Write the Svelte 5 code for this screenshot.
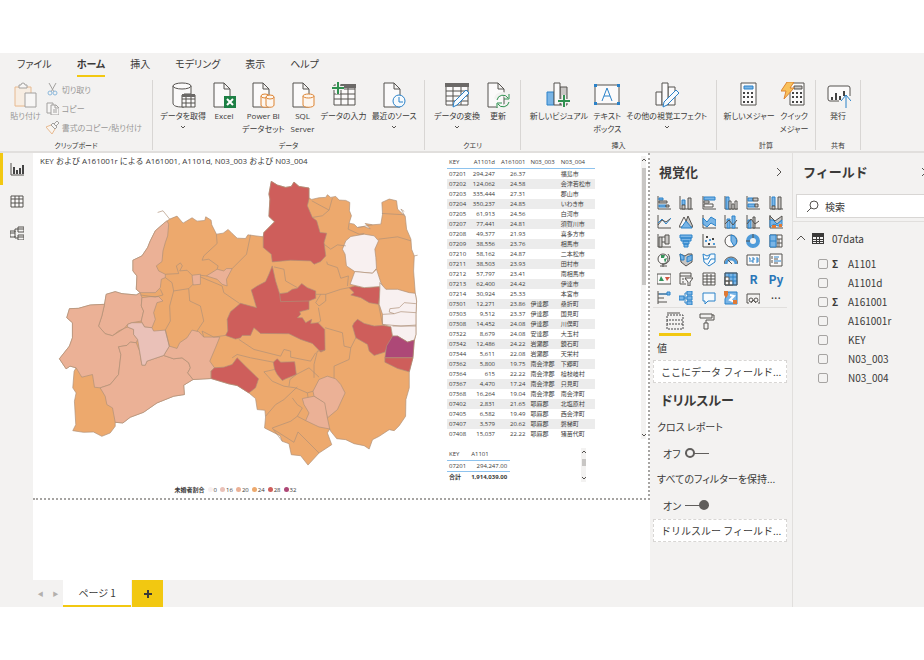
<script lang="ts">
	type Shape = [cls: string, d: string];

	const menu = ['ファイル', 'ホーム', '挿入', 'モデリング', '表示', 'ヘルプ'];

	// Ribbon icons, 26x26
	const doc = 'M3 1h10l6 6v18H3zM13 1v6h6';
	const ribbonIcons: Record<string, Shape[]> = {
		paste: [['of', 'M3 5h16v20H3z'], ['o', 'M3 5h16v19H3z'], ['kw', 'M7 6V3h2a2 2 0 0 1 4 0h2v3z'], ['kw', 'M13 11h11v14H13z']],
		getData: [['kw', 'M3 4v17c0 3 4 4 9 4h2V12h7V4'], ['kw', 'M3 4a9 3 0 1 0 18 0a9 3 0 1 0-18 0'], ['kw', 'M12 13h13v12H12z'], ['k', 'M12 17h13M12 21h13M16 13v12M21 13v12'], ['kf', 'M12 12h13v3H12z']],
		excel: [['kw', doc], ['g', 'M13 14h12v12H13z'], ['w', 'm16 17 6 6m0-6-6 6']],
		dataset: [['kw', doc], ['ow', 'M11 14v9c0 3 8 3 8 0v-9'], ['ow', 'M11 14a4 2 0 1 0 8 0a4 2 0 1 0-8 0'], ['ow', 'M16 15v8c0 3 8 3 8 0v-8'], ['ow', 'M16 15a4 2 0 1 0 8 0a4 2 0 1 0-8 0']],
		sql: [['kw', doc], ['ow', 'M13 14v9c0 3 11 3 11 0v-9'], ['ow', 'M13 14a5.5 2 0 1 0 11 0a5.5 2 0 1 0-11 0']],
		enter: [['kw', 'M3 3h21v20H3z'], ['k', 'M3 12h21M3 17h21M10 3v20M17 3v20M3 7h21'], ['kf', 'M10 2h15v4H10z'], ['cut', 'M1 6h12M7 0v12'], ['gs', 'M1 6h12M7 0v12']],
		recent: [['kw', doc], ['bw', 'M12 19a6 6 0 1 0 12 0a6 6 0 1 0-12 0'], ['b', 'M18 15v5h4']],
		transform: [['kw', 'M2 2h22v21H2z'], ['k', 'M2 9h22M2 14h22M2 19h22M9 4v19M17 4v19'], ['kf', 'M1 1h24v4H1z'], ['bw', 'm22 8 3 3-12 12-4 2 1-5z']],
		refresh: [['kw', doc], ['cut', 'M11 17a6 6 0 0 1 11-2M23 20a6 6 0 0 1-11 2'], ['green1', 'M12 18a6 6 0 0 1 11-2m1-4v5h-5M24 20a6 6 0 0 1-11 2m-1 4v-5h5']],
		visual: [['bf', 'M1 10h7v13H1z'], ['kgrey', 'M14 5h7v18h-7z'], ['kw', 'M8 1h6v22H8z'], ['cut', 'M12 19h12M18 13v12'], ['gs', 'M12 19h12M18 13v12']],
		text: [['kw', 'M1 3h24v19H1z'], ['b', 'm8 19 5-13 5 13M10 14h6'], ['dot', 'M0 2h3v3H0zM23 2h3v3h-3zM0 20h3v3H0zM23 20h3v3h-3z']],
		others: [['kw', 'M2 10h6v13H2zM14 5h7v18h-7z'], ['kw', 'M8 1h6v22H8z'], ['bw', 'm22 8 3 3-12 12-4 2 1-5z']],
		measure: [['kw', 'M5 1h15v22H5z'], ['bf', 'M8 4h9v3H8z'], ['dash', 'M7 11h11M7 15h11M7 20h11']],
		quick: [['kw', 'M9 1h14v22H9z'], ['kgrey', 'M13 4h8v3h-8z'], ['dash', 'M11 11h11M11 15h11M11 20h11'], ['bolt', 'M6 0h7L9 6h4L3 17l2-8H0z']],
		publish: [['kw', 'M14 19H5a2 2 0 0 1-2-2V6a2 2 0 0 1 2-2h18a2 2 0 0 1 2 2v8'], ['bars', 'M7 18v-3M11 18v-7M15 18v-4M19 14v-5'], ['cut', 'M21 25V14'], ['b', 'M21 26V13m-5 6 5-6 5 6']]
	};

	const groups = [
		{ name: 'データ', items: [['getData', 'データを取得', 'v'], ['excel', 'Excel', ''], ['dataset', 'Power BI', 'データセット'], ['sql', 'SQL', 'Server'], ['enter', 'データの入力', ''], ['recent', '最近のソース', 'v']] },
		{ name: 'クエリ', items: [['transform', 'データの変換', 'v'], ['refresh', '更新', '']] },
		{ name: '挿入', items: [['visual', '新しいビジュアル', ''], ['text', 'テキスト', 'ボックス'], ['others', 'その他の視覚エフェクト', 'v']] },
		{ name: '計算', items: [['measure', '新しいメジャー', ''], ['quick', 'クイック', 'メジャー']] },
		{ name: '共有', items: [['publish', '発行', '']] }
	];

	// Visual gallery icons, 14x14
	const axis: Shape = ['k', 'M1 0v13h13'];
	const gallery: [string, Shape[]][] = [
		['積み上げ横棒', [axis, ['bf', 'M2 2h4v2H2zM2 9h7v2H2z'], ['kgrey', 'M2 5h8v2H2zM9 9h3v2H9z']]],
		['積み上げ縦棒', [axis, ['bf', 'M3 4h3v5H3z'], ['kgrey', 'M3 9h3v4H3zM9 2h3v11H9z']]],
		['集合横棒', [axis, ['bf', 'M2 1h11v3H2z'], ['kw', 'M2 5h5v2H2zM2 8h9v3H2z']]],
		['集合縦棒', [axis, ['bf', 'M2 1h3v12H2z'], ['kw', 'M5 5h2v8H5zM8 8h2v5H8zM11 5h2v8h-2z']]],
		['100% 横棒', [axis, ['bf', 'M2 2h5v3H2zM2 8h7v3H2z'], ['kgrey', 'M7 2h5v3H7zM9 8h3v3H9z']]],
		['100% 縦棒', [axis, ['bf', 'M3 1h3v9H3z'], ['kgrey', 'M9 1h3v12H9zM3 10h3v3H3z']]],
		['折れ線', [axis, ['b', 'm1 8 4-4 4 5 5-6'], ['k', 'm1 10 4-5 4 2 4-3']]],
		['面', [['kgrey', 'm5 12 4-11 5 11z'], ['kw', 'M0 12 5 2l5 10z'], ['bf', 'm2 13 5-7 6 7z']]],
		['積み上げ面', [axis, ['bf', 'm1 3 4 4 4-5 5 3v6L9 8l-4 4-4-3z']]],
		['複合', [axis, ['bf', 'M3 4h3v9H3zM8 1h3v12H8z'], ['k', 'm1 9 4-4 4 5 4-5']]],
		['複合集合', [axis, ['bf', 'M2 5h3v8H2z'], ['kgrey', 'M7 2h2v11H7z'], ['k', 'm1 9 4-5 4 5 4-3']]],
		['リボン', [axis, ['kgrey', 'M1 1 6 6l7-5v4L7 10 1 5z'], ['bf', 'M1 5h3l4 4 5-4v6H9l-4-2-4 3z'], ['orange', 'M3 10h4v3H3zM10 9h3v3h-3z']]],
		['ウォーターフォール', [axis, ['kgrey', 'M2 3h3v10H2zM8 1h4v9H8z'], ['k', 'M5 3h3M5 8h3']]],
		['じょうご', [['bf', 'M1 1h12v3H1zM2 4h10v3H2zM4 7h6v3H4zM5 10h4v3H5z']]],
		['散布図', [axis, ['dots', 'M4 3h2M10 5h2M6 10h2'], ['bdots', 'M3 7h2M7 6h2M11 10h2']]],
		['円', [['kw', 'M7 1a6 6 0 1 0 0 12A6 6 0 1 0 7 1'], ['bf', 'M7 1v6l3 5a6 6 0 0 0-3-11']]],
		['ドーナツ', [['ring', 'M7 2a5 5 0 1 0 0 10A5 5 0 1 0 7 2'], ['k', 'M7 0v4M0 7h4']]],
		['ツリーマップ', [['kw', 'M1 1h12v12H1zM8 1v12M8 5h5M8 9h5M10 5v8'], ['bf', 'M1 1h6v12H1zM1 7h6']]],
		['マップ', [['kw', 'M6 1a5 5 0 1 0 0 10A5 5 0 1 0 6 1'], ['green', 'M4 2h4L7 5H4zM7 6l3-1-2 5z'], ['k', 'M11 1c4 5 0 11-6 10m1 0v3M3 13h7']]],
		['塗り分け地図', [['kgrey', 'm1 1 5 2 3-2h4v8l-6 4-5-4z'], ['bf', 'm1 1 4 2v4H2zM8 4l5-2v5L8 9z']]],
		['図形マップ', [['bw', 'm1 1 4 2 4-2h4v8l-6 4-5-4z'], ['b', 'M2 6h4l2-4m5 4H9l-3 5']]],
		['ゲージ', [['gauge', 'M2 11a5 5 0 0 1 10 0'], ['k', 'm8 11-4-4M0 11a7 7 0 0 1 14 0']]],
		['カード', [['kw', 'M1 2h13v10H1z'], ['b', 'M3 5h1v4M6 5h2v2H6v2h2M10 5h2v4h-2M10 7h2']]],
		['複数の行カード', [['kw', 'M1 1h12v12H1z'], ['b', 'M5 4h5M5 8h7'], ['k', 'M3 3v3M3 7v3M5 6h4M5 10h4']]],
		['KPI', [['kw', 'M0 2h14v10H0z'], ['green', 'm4 4 3 5H2z'], ['red', 'M8 5h5l-3 4z']]],
		['スライサー', [['k', 'M7 12H1V1h11v4M1 4h11M3 7h2M3 10h2M6 7h1'], ['kw', 'M6 6h8l-3 4v4H9v-4z']]],
		['テーブル', [['kw', 'M1 1h12v12H1z'], ['k', 'M1 4h12M1 7h12M1 10h12M5 2v11M9 2v11']]],
		['マトリックス', [['bf', 'M1 1h12v12H1z'], ['kw', 'M1 5h4v4H1zM1 9h4v4H1zM5 9h4v4H5z'], ['b', 'M9 1v12M5 1v4M5 5h8M9 9h4'], ['k', 'M1 1h12v12H1z']]],
		['R', []],
		['Py', []],
		['主要な影響元', [['k', 'M1 0v13M1 3h9M1 7h6M1 11h9'], ['bf', 'M10 1h3v3h-3z'], ['b', 'M2 3h8']]],
		['分解ツリー', [['bf', 'M0 5h5v4H0zM8 0h5v4H8zM8 5h5v4H8zM8 10h5v4H8z'], ['b', 'M5 7h3M6 2v10M6 2h2M6 12h2']]],
		['Q&A', [['bw', 'M1 2h12v8H6l-3 3v-3H1z']]],
		['ArcGIS', [['bf', 'M4 1h9v12H1V8z'], ['w', 'm6 4 4 1-4 4 5 2'], ['orange', 'M0 0h4v4L2 7 0 4zM9 9h4v4H9z']]],
		['Power Apps', [['k', 'M3 12H1V3h13v9h-2'], ['k', 'M3 9a2 2 0 1 0 4 0a2 2 0 1 0-4 0M8 9a2 2 0 1 0 4 0a2 2 0 1 0-4 0M5 12l2-3 3 3']]],
		['その他', []]
	];

	const rows = [
		['07201', '294,247', '26.37', '', '福島市'],
		['07202', '124,062', '24.58', '', '会津若松市'],
		['07203', '335,444', '27.31', '', '郡山市'],
		['07204', '350,237', '24.85', '', 'いわき市'],
		['07205', '61,913', '24.56', '', '白河市'],
		['07207', '77,441', '24.81', '', '須賀川市'],
		['07208', '49,377', '21.93', '', '喜多方市'],
		['07209', '38,556', '23.76', '', '相馬市'],
		['07210', '58,162', '24.87', '', '二本松市'],
		['07211', '38,503', '23.93', '', '田村市'],
		['07212', '57,797', '23.41', '', '南相馬市'],
		['07213', '62,400', '24.42', '', '伊達市'],
		['07214', '30,924', '25.33', '', '本宮市'],
		['07301', '12,271', '23.86', '伊達郡', '桑折町'],
		['07303', '9,512', '23.37', '伊達郡', '国見町'],
		['07308', '14,452', '24.08', '伊達郡', '川俣町'],
		['07322', '8,679', '24.08', '安達郡', '大玉村'],
		['07342', '12,486', '24.22', '岩瀬郡', '鏡石町'],
		['07344', '5,611', '22.08', '岩瀬郡', '天栄村'],
		['07362', '5,800', '19.75', '南会津郡', '下郷町'],
		['07364', '615', '22.22', '南会津郡', '檜枝岐村'],
		['07367', '4,470', '17.24', '南会津郡', '只見町'],
		['07368', '16,264', '19.04', '南会津郡', '南会津町'],
		['07402', '2,831', '21.65', '耶麻郡', '北塩原村'],
		['07405', '6,582', '19.49', '耶麻郡', '西会津町'],
		['07407', '3,579', '20.62', '耶麻郡', '磐梯町'],
		['07408', '15,037', '22.22', '耶麻郡', '猪苗代町']
	];

	const legend = [['l0', '0'], ['l16', '16'], ['l20', '20'], ['l24', '24'], ['l28', '28'], ['l32', '32']];

	// Prefecture outline first, then the municipalities that leave the 24 band
	const regions: Shape[] = [
		['l24', 'M358 135 380 126 398 147 425 131 440 141 463 139 466 128 482 138 484 152 498 180 518 177 533 166 545 178 560 192 585 193 592 182 638 188 640 175 672 143 655 127 658 75 655 60 662 22 680 33 705 40 722 37 730 24 745 37 775 42 775 72 783 76 805 71 825 70 830 62 840 70 855 67 865 78 885 79 897 85 896 110 902 125 895 147 910 150 920 160 940 157 958 164 943 148 965 152 990 150 995 120 993 85 1015 75 1037 80 1040 105 1063 127 1067 165 1080 195 1082 225 1090 245 1088 290 1093 357 1097 380 1095 420 1095 480 1090 500 1086 550 1075 592 1075 640 1065 675 1064 725 1045 753 1030 768 1015 765 985 785 965 795 955 823 940 813 910 807 885 795 858 792 840 770 837 763 830 775 843 810 805 835 772 871 750 843 722 840 715 807 695 800 688 783 642 760 645 727 643 707 620 705 615 672 595 655 560 633 535 628 482 612 428 615 400 632 402 660 370 665 320 685 280 713 240 728 218 745 195 743 195 755 180 775 155 785 130 772 100 773 68 768 77 750 73 680 78 655 68 640 72 590 78 580 60 575 48 583 28 553 58 515 67 490 67 445 50 430 58 403 85 402 120 392 163 390 168 360 195 352 215 358 258 362 270 355 258 345 260 305 248 290 248 258 275 245 292 220 300 200 315 170 340 148z'],
		['l20', 'M350 140 355 150 352 185 345 205 338 230 335 262 318 275 325 290 345 300 345 310 333 315 330 340 315 355 270 355 258 345 260 305 248 290 248 258 275 245 292 220 300 200 315 170 340 148z'],
		['l20', 'M168 360 195 352 215 358 258 362 270 355 275 370 273 395 280 410 273 440 245 445 232 450 222 462 205 470 187 484 165 478 145 455 155 425 163 390z'],
		['l20', 'M163 390 155 425 145 455 165 478 187 484 222 462 232 458 250 465 250 480 262 495 258 505 240 503 230 513 205 517 212 540 205 600 180 630 150 640 133 638 127 600 95 608 78 580 60 575 48 583 28 553 58 515 67 490 67 445 50 430 58 403 85 402 120 392z'],
		['l20', 'M205 517 230 513 240 503 258 505 268 530 275 572 285 572 290 560 340 543 370 553 395 550 415 565 420 580 412 595 428 615 400 632 402 660 370 665 320 685 280 713 240 728 218 745 195 743 187 700 170 690 165 665 150 640 180 630 205 600 212 540z'],
		['l20', 'M340 543 357 515 380 522 388 505 410 490 425 467 445 472 460 488 508 488 495 520 478 560 492 580 482 590 482 612 428 615 412 595 420 580 415 565 395 550 370 553z'],
		['l20', 'M275 370 300 367 325 367 338 380 320 385 310 415 315 435 305 460 283 458 273 440 280 410 273 395z'],
		['l16', 'M232 450 245 445 275 445 283 458 305 460 310 470 345 467 357 515 340 543 290 560 285 572 275 572 268 530 262 495 250 480 250 465 232 458z'],
		['l20', 'M425 303 450 300 450 330 428 332z'],
		['l20', 'M468 305 500 285 520 290 528 283 545 283 528 315 530 335 515 330 500 315z'],
		['l28', 'M638 188 640 175 672 143 655 127 658 75 655 60 662 22 680 33 705 40 722 37 730 24 745 37 775 42 775 75 770 95 785 130 798 140 808 175 828 177 820 205 825 245 810 262 790 270 780 260 720 258 665 263 662 240 638 220z'],
		['l28', 'M665 275 655 300 645 322 620 335 602 347 618 400 570 387 540 412 530 435 532 470 525 483 555 494 570 490 575 483 600 483 610 460 630 477 715 478 750 495 785 507 810 533 823 527 822 465 802 445 780 447 783 435 765 445 755 430 740 430 750 420 747 412 775 405 775 380 795 372 795 350 770 340 753 328 740 342 725 345 710 355 687 358 675 320z'],
		['l28', 'M492 580 520 578 545 570 560 550 585 575 624 613 615 640 595 655 560 633 535 628 482 612 482 590z'],
		['l28', 'M668 563 680 553 690 563 732 562 737 600 705 613 695 618 680 600 672 585z'],
		['l28', 'M895 340 912 335 940 340 985 337 988 345 983 390 955 385 930 370 900 362 910 355z'],
		['l28', 'M910 445 920 435 940 447 970 455 995 453 1020 457 1025 485 1002 533 970 543 955 530 950 510 915 490 905 455z'],
		['l0', 'M885 200 900 187 940 180 970 185 983 200 972 225 975 250 977 282 965 297 912 292 887 275 883 240 875 225z'],
		['l0', 'M912 292 965 297 977 285 990 325 1000 345 985 337 940 340 898 330z'],
		['l0', 'M987 325 1005 345 1040 345 1075 355 1093 357 1097 380 1095 420 1095 480 1090 497 1070 503 1040 485 1025 485 1020 457 995 450 995 420 985 390 987 345z'],
		['l32', 'M1025 485 1040 485 1070 503 1090 497 1086 550 1002 550 1007 515z'],
		['l28', 'M1002 550 1086 550 1075 592 1040 582 1002 563z'],
		['l20', 'M787 650 805 615 830 605 855 613 870 630 883 655 860 705 830 730 823 700 820 685 790 665z'],
		['l20', 'M755 672 790 665 822 685 830 730 837 763 805 757 765 738 775 715 760 690z']
	];

	const borders =
		'M498 180 500 208 460 245 455 258 475 255 503 275 500 285M345 300 385 298 378 275 390 266 396 275 388 290 410 288 425 303M450 303 468 305' +
		'M450 308 515 335 520 355 568 388M345 310 365 325 370 350 415 343 428 330M370 350 358 395 360 440 345 467M357 515 345 467' +
		'M415 343 418 380 450 395 460 440 440 470M460 488 455 470 490 488 525 483M600 182 588 240 545 283M270 362 315 368 338 362 330 345' +
		'M785 130 815 125 835 108 845 72M783 80 805 92 835 108M820 210 840 225 860 212 885 215M828 262 830 270 860 280 870 312 893 305 890 335' +
		'M670 278 700 285 705 320 740 340M687 358 690 382 775 380M795 360 825 360 870 345 895 340M825 360 825 380 805 395 795 385 810 360' +
		'M803 400 810 440 802 445M983 195 1040 188 1080 200M993 118 1060 122M983 390 995 450M895 147 892 165 925 180 940 178M965 152 920 160' +
		'M823 460 875 475 880 515 900 520 895 555 850 575 850 610M915 490 900 520M823 527 800 530 790 570 790 610' +
		'M565 495 610 525 690 545 700 525 720 530 720 548 780 560 795 535M545 550 560 540 600 550 668 563M672 585 640 592 665 620 700 635 735 640 770 655 787 650' +
		'M737 600 775 580 805 608M715 635 718 615 737 600M770 655 772 668M740 637 700 675 675 690 645 725M725 670 740 690 755 700 740 725 720 740 665 760 695 800' +
		'M670 765 730 803 742 772 805 835M740 725 765 738M995 420 1030 418 1050 412 1095 415M1030 418 1015 413 1017 403 1045 400 1060 385 1095 388' +
		'M995 450 1050 455 1095 452M1025 455 1095 455M322 115 338 110 358 135M1063 127 1050 105 1060 112M1090 245 1100 243';

	const fields = ['A1101', 'A1101d', 'A161001', 'A161001r', 'KEY', 'N03_003', 'N03_004'];
	const summed = ['A1101', 'A161001'];

	let search = $state('');
	let crossReport = $state(false);
	let keepFilters = $state(true);
</script>

{#snippet icon(shapes: Shape[], size: number)}
	<svg class="icon" width={size} height={size} viewBox="0 0 {size} {size}" aria-hidden="true">
		{#each shapes as [cls, d]}<path class={cls} {d} />{/each}
	</svg>
{/snippet}

{#snippet arrow(d: string)}
	<svg class="arrow" width="8" height="8" viewBox="0 0 8 8" aria-hidden="true"><path {d} /></svg>
{/snippet}

{#snippet scrollbar(kind: string)}
	<div class="scroll {kind}">
		{@render arrow('m2 5 2-2 2 2')}
		<span class="thumb"></span>
		{@render arrow('m2 3 2 2 2-2')}
	</div>
{/snippet}

<div class="app">
	<header>
		<nav class="menu">
			{#each menu as item}
				<button class:active={item === 'ホーム'}>{item}</button>
			{/each}
		</nav>
		<div class="ribbon">
			<section class="group">
				<div class="commands clipboard">
					<button class="command" disabled>{@render icon(ribbonIcons.paste, 26)}<span>貼り付け</span></button>
					<div class="stack">
						<button disabled>
							<svg width="13" height="13" viewBox="0 0 13 13"><path class="k" d="m3 0 5 9M10 0 5 9" /><path class="b" d="M2 10a2 2 0 1 0 4 0a2 2 0 1 0-4 0M7 10a2 2 0 1 0 4 0a2 2 0 1 0-4 0" /></svg>
							切り取り
						</button>
						<button disabled>
							<svg width="13" height="13" viewBox="0 0 13 13"><path class="kw" d="M1 1h6v10H1z" /><path class="kw" d="M5 3h5l3 3v7H5zM9 3v3h3M7 8h4M7 10h4" /></svg>
							コピー
						</button>
						<button disabled>
							<svg width="13" height="13" viewBox="0 0 13 13"><path class="ow" d="m0 6 5-2 4 4-3 5z" /><path class="kw" d="m5 4 2-2 4 4-2 2zM8 3l3-3 2 2-3 3" /></svg>
							書式のコピー/貼り付け
						</button>
					</div>
				</div>
				<h2>クリップボード</h2>
			</section>
			{#each groups as group}
				<section class="group">
					<div class="commands">
						{#each group.items as [name, label, more]}
							<button class="command">
								{@render icon(ribbonIcons[name], 26)}
								<span>{label}</span>
								{#if more === 'v'}{@render arrow('m2 4 2 2 2-2')}{:else if more}<span>{more}</span>{/if}
							</button>
						{/each}
					</div>
					<h2>{group.name}</h2>
				</section>
			{/each}
		</div>
	</header>

	<div class="body">
		<nav class="rail">
			<button class="active" aria-label="レポート">{@render icon([['k', 'M1 1v12h13'], ['bars', 'M4 12V5M7 12V8M10 12V6M13 12V3']], 14)}</button>
			<button aria-label="データ">{@render icon([['kw', 'M1 2h12v11H1z'], ['k', 'M1 5h12M1 9h12M5 2v11M9 2v11']], 14)}</button>
			<button aria-label="モデル">{@render icon([['k', 'M0 5h5v6H0zM0 7h5M8 1h6v5H8zM8 3h6M8 9h6v5H8zM8 11h6M5 6V3h3M5 10v2h3']], 14)}</button>
		</nav>

		<main>
			<div class="page">
				<figure>
					<figcaption>KEY および A161001r による A161001, A1101d, N03_003 および N03_004</figcaption>
					<svg class="map" viewBox="-51 -15 1212 930" role="img" aria-label="未婚者割合">
						{#each regions as [cls, d]}<path class={cls} {d} />{/each}
						<path class="border" d={borders} />
					</svg>
					<ul class="legend">
						<li><b>未婚者割合</b></li>
						{#each legend as [cls, label]}
							<li><svg width="5" height="5" viewBox="0 0 5 5"><circle class={cls} cx="2.5" cy="2.5" r="2.5" /></svg>{label}</li>
						{/each}
					</ul>
				</figure>
				<div class="tables">
					<div class="visual">
						<table class="wide">
							<thead>
								<tr><th>KEY</th><th class="num">A1101d</th><th class="num">A161001</th><th>N03_003</th><th>N03_004</th></tr>
							</thead>
							<tbody>
								{#each rows as [key, total, rate, county, city] (key)}
									<tr><td>{key}</td><td class="num">{total}</td><td class="num">{rate}</td><td>{county}</td><td>{city}</td></tr>
								{/each}
							</tbody>
						</table>
						{@render scrollbar('tall')}
					</div>
					<div class="visual small">
						<table>
							<thead><tr><th>KEY</th><th>A1101</th></tr></thead>
							<tbody><tr><td>07201</td><td class="num">294,247.00</td></tr></tbody>
							<tfoot><tr><td>合計</td><td class="num">1,914,039.00</td></tr></tfoot>
						</table>
						{@render scrollbar('short')}
					</div>
				</div>
			</div>
			<footer>
				<button class="step" aria-label="前のページ">◀</button>
				<button class="step" aria-label="次のページ">▶</button>
				<button class="tab">ページ 1</button>
				<button class="add" aria-label="ページの追加">
					<svg width="10" height="10" viewBox="0 0 10 10"><path d="M5 1v8M1 5h8" /></svg>
				</button>
			</footer>
		</main>

		<aside class="visualizations">
			<div class="head">
				<h1>視覚化</h1>
				<svg width="8" height="12" viewBox="0 0 8 12"><path class="k" d="m2 2 4 4-4 4" /></svg>
			</div>
			<div class="gallery">
				{#each gallery as [name, shapes]}
					<button aria-label={name}>
						{#if shapes.length}{@render icon(shapes, 14)}{:else if name === 'その他'}<span class="more">···</span>{:else}<span class="lang">{name}</span>{/if}
					</button>
				{/each}
			</div>
			<div class="panes">
				<button class="active" aria-label="フィールド">
					<svg width="18" height="18" viewBox="0 0 18 18"><path class="k" d="M1 1h13" /><path class="dashed" d="M1 3h16v5H1zM1 8v4h16V8M1 12v5h16v-5" /></svg>
				</button>
				<button aria-label="書式">
					<svg width="18" height="18" viewBox="0 0 18 18"><path class="k" d="M2 2h12v4H2zM14 3h2v5H8v3M6 11h4v6H6z" /></svg>
				</button>
			</div>
			<h3>値</h3>
			<div class="well">ここにデータ フィールド...</div>
			<h1 class="drill">ドリルスルー</h1>
			<h3>クロス レポート</h3>
			<label class="toggle">{crossReport ? 'オン' : 'オフ'}<input type="checkbox" bind:checked={crossReport} /></label>
			<h3>すべてのフィルターを保持...</h3>
			<label class="toggle">{keepFilters ? 'オン' : 'オフ'}<input type="checkbox" bind:checked={keepFilters} /></label>
			<div class="well">ドリルスルー フィールド...</div>
		</aside>

		<aside class="fields">
			<div class="head">
				<h1>フィールド</h1>
				<svg width="8" height="12" viewBox="0 0 8 12"><path class="k" d="m2 2 4 4-4 4" /></svg>
			</div>
			<div class="search">
				<svg width="13" height="13" viewBox="0 0 13 13"><path class="k" d="M4 5a4 4 0 1 0 8 0a4 4 0 1 0-8 0M5 8l-4 4" /></svg>
				<input type="text" aria-label="検索" placeholder="検索" bind:value={search} />
			</div>
			<div class="source">
				<svg width="10" height="8" viewBox="0 0 10 8"><path class="k" d="m1 6 4-4 4 4" /></svg>
				<svg width="12" height="11" viewBox="0 0 12 11"><path class="solid" d="M0 0h12v11H0z" /><path class="holes" d="M1 4h3v2H1zM5 4h2v2H5zM8 4h3v2H8zM1 7h3v1H1zM5 7h2v1H5zM8 7h3v1H8zM1 9h3v1H1zM5 9h2v1H5zM8 9h3v1H8z" /></svg>
				<span>07data</span>
			</div>
			<ul>
				{#each fields as field (field)}
					<li>
						<label><input type="checkbox" /><span class="sigma">{summed.includes(field) ? 'Σ' : ''}</span>{field}</label>
					</li>
				{/each}
			</ul>
		</aside>
	</div>
</div>

<style>
	:global(body) {
		margin: 0;
		background: #fff;
		overflow: hidden;
	}
	.app {
		display: flex;
		flex-direction: column;
		box-sizing: border-box;
		height: 100vh;
		padding: 53px 0;
		overflow: hidden;
		font-family: 'Noto Sans CJK JP', sans-serif;
		font-feature-settings: 'palt';
		font-size: 8px;
		color: #3b3a39;
	}
	button {
		font: inherit;
		font-feature-settings: inherit;
		color: inherit;
		background: none;
		border: 0;
		padding: 0;
	}
	h1,
	h2,
	h3,
	ul,
	figure {
		margin: 0;
		padding: 0;
	}
	ul {
		list-style: none;
	}
	svg {
		display: block;
		flex: none;
	}
	path {
		fill: none;
		stroke-width: 1;
	}

	/* icon strokes and fills */
	.k,
	.kw,
	.kgrey {
		stroke: #55524f;
	}
	.kw {
		fill: #fbfafa;
	}
	.kgrey {
		fill: #c8c6c4;
	}
	.kf {
		fill: #6b6967;
	}
	.o,
	.ow {
		stroke: #dd8433;
	}
	.ow {
		fill: #fdf6ef;
	}
	.of {
		fill: #fbe9d5;
	}
	.b,
	.bw,
	.bf {
		stroke: #2a82c9;
	}
	.bw {
		fill: #f6fafd;
	}
	.bf {
		fill: #7ab5e6;
	}
	.dot {
		fill: #2a82c9;
	}
	.g {
		fill: #1d8045;
	}
	.w {
		stroke: #fff;
		stroke-width: 2;
	}
	.gs {
		stroke: #2f9150;
		stroke-width: 2;
	}
	.green1 {
		stroke: #2f9150;
	}
	.cut {
		stroke: #f3f2f1;
		stroke-width: 4;
	}
	.bars {
		stroke: #444;
		stroke-width: 2;
	}
	.dash {
		stroke: #444;
		stroke-width: 2;
		stroke-dasharray: 2 2;
	}
	.bolt {
		fill: #f9c15b;
		stroke: #dd8433;
	}
	.orange {
		fill: #e07a35;
	}
	.green {
		fill: #35935a;
	}
	.red {
		fill: #d0553f;
	}
	.ring {
		stroke: #4f9bd9;
		stroke-width: 4;
	}
	.gauge {
		stroke: #4f9bd9;
		stroke-width: 3;
	}
	.dots {
		stroke: #444;
		stroke-width: 2;
	}
	.bdots {
		stroke: #4f9bd9;
		stroke-width: 2;
	}
	.dashed {
		stroke: #444;
		stroke-dasharray: 2 1;
	}
	.solid {
		fill: #3b3a39;
	}
	.holes {
		fill: #f3f2f1;
	}
	.arrow path {
		stroke: #55524f;
	}

	header {
		background: #f3f2f1;
		border-bottom: 2px solid #e1dfdd;
	}
	.menu {
		display: flex;
		gap: 25px;
		height: 24px;
		padding-left: 17px;
		font-size: 10px;
	}
	.menu button {
		box-sizing: border-box;
		height: 24px;
		line-height: 20px;
		border-bottom: 2px solid transparent;
	}
	.menu .active {
		font-weight: 700;
		border-color: #f2c811;
	}
	.ribbon {
		display: grid;
		grid-template-columns: 153px 272px 96px 196px 99px 45px;
		padding: 3px 0 1px;
	}
	.group {
		display: flex;
		flex-direction: column;
		justify-content: space-between;
		height: 70px;
		border-right: 1px solid #d8d6d4;
	}
	.group h2 {
		font-size: 7px;
		font-weight: 400;
		line-height: 9px;
		text-align: center;
	}
	.commands {
		display: flex;
		justify-content: center;
		align-items: flex-start;
		gap: 5px;
		padding-top: 2px;
		font-family: 'Open Sans', 'Noto Sans CJK JP', sans-serif;
	}
	.command {
		display: flex;
		flex-direction: column;
		align-items: center;
		line-height: 13px;
		white-space: nowrap;
	}
	.command .icon {
		margin-bottom: 1px;
	}
	.clipboard button {
		opacity: 0.5;
	}
	.stack {
		display: flex;
		flex-direction: column;
		gap: 6px;
		padding-top: 1px;
	}
	.stack button {
		display: flex;
		align-items: center;
		gap: 3px;
		height: 13px;
		line-height: 13px;
		white-space: nowrap;
	}

	.body {
		flex: 1;
		display: flex;
		min-height: 0;
	}
	.rail {
		width: 33px;
		background: #f3f2f1;
	}
	.rail button {
		display: flex;
		align-items: center;
		box-sizing: border-box;
		width: 100%;
		height: 32px;
		padding-left: 7px;
		border-left: 3px solid transparent;
	}
	.rail .active {
		border-color: #f2c811;
	}
	main {
		flex: 1;
		display: flex;
		flex-direction: column;
		justify-content: space-between;
		min-width: 0;
	}
	.page {
		display: flex;
		border-right: 2px dotted #a6a4a2;
		border-bottom: 2px dotted #a6a4a2;
	}
	figure {
		flex: 1;
		min-width: 0;
	}
	figcaption {
		padding-left: 7px;
		font-family: 'Open Sans', 'Noto Sans CJK JP', sans-serif;
		font-feature-settings: normal;
		line-height: 16px;
		white-space: nowrap;
	}
	.map {
		width: 100%;
		height: auto;
	}
	.map path {
		stroke: #ae9078;
		stroke-width: 2;
		stroke-linejoin: round;
	}
	.l0 {
		fill: #f8f0f0;
	}
	.l16 {
		fill: #eac1b8;
	}
	.l20 {
		fill: #ebb196;
	}
	.l24 {
		fill: #eda96d;
	}
	.l28 {
		fill: #ce5e5b;
	}
	.l32 {
		fill: #ad4877;
	}
	.legend {
		display: flex;
		justify-content: center;
		gap: 3px;
		padding-top: 3px;
		font-family: 'Open Sans', 'Noto Sans CJK JP', sans-serif;
		font-size: 6px;
		line-height: 14px;
	}
	.legend li {
		display: flex;
		align-items: center;
		gap: 1px;
	}
	.tables {
		width: 210px;
	}
	.visual {
		display: flex;
		justify-content: space-between;
		padding: 3px 2px 0 9px;
	}
	.small {
		padding: 9px 62px 16px 9px;
	}
	table {
		align-self: flex-start;
		border-collapse: collapse;
		font-family: 'Open Sans', 'Noto Sans CJK JP', sans-serif;
		font-size: 6px;
		line-height: 10px;
		white-space: nowrap;
	}
	.wide {
		width: 148px;
	}
	th,
	td {
		height: 10px;
		padding: 0 3px 0 2px;
		text-align: left;
		font-weight: 400;
	}
	th {
		height: 12px;
		border-bottom: 1px solid #8ec3ee;
	}
	.num {
		text-align: right;
	}
	.wide tbody tr:nth-child(even) {
		background: #ececec;
	}
	tfoot td {
		font-weight: 700;
		border-top: 1px solid #8ec3ee;
	}
	.scroll {
		display: flex;
		flex-direction: column;
		align-items: center;
		width: 5px;
		background: #f3f2f1;
	}
	.thumb {
		width: 4px;
		background: #c8c6c4;
	}
	.scroll .arrow:last-child {
		margin-top: auto;
	}
	.tall .thumb {
		height: 117px;
		margin-top: 4px;
	}
	.short .thumb {
		height: 7px;
		margin-top: 3px;
	}

	footer {
		display: flex;
		height: 27px;
		background: #f3f2f1;
	}
	.step {
		width: 15px;
		font-size: 6px;
		color: #b3b0ad;
	}
	.tab {
		width: 68px;
		font-size: 10px;
		background: #fff;
		border-bottom: 2px solid #f2c811;
	}
	.add {
		display: flex;
		align-items: center;
		justify-content: center;
		width: 31px;
		margin-left: 1px;
		background: #f2c811;
	}
	.add path {
		stroke: #3b3a39;
		stroke-width: 2;
	}

	aside {
		box-sizing: border-box;
		background: #f3f2f1;
		font-size: 10px;
		white-space: nowrap;
	}
	.head {
		display: flex;
		align-items: center;
		justify-content: space-between;
		height: 38px;
	}
	h1 {
		font-size: 13px;
		line-height: 20px;
		font-weight: 700;
	}
	.visualizations {
		width: 143px;
		padding: 0 5px 0 3px;
		border-right: 1px solid #e1dfdd;
	}
	.visualizations .head {
		padding: 0 4px 0 6px;
	}
	.gallery {
		display: grid;
		grid-template-columns: repeat(6, 1fr);
		grid-auto-rows: 19px;
		padding: 2px 0 0;
		border-bottom: 1px solid #e1dfdd;
	}
	.gallery button {
		display: flex;
		align-items: center;
		justify-content: center;
	}
	.lang {
		font-size: 12px;
		line-height: 14px;
		font-weight: 700;
		color: #2a76b8;
	}
	.more {
		font-family: 'Open Sans', sans-serif;
		font-size: 13px;
		line-height: 14px;
	}
	.panes {
		display: flex;
		height: 28px;
		padding-left: 6px;
	}
	.panes button {
		display: flex;
		align-items: center;
		justify-content: center;
		width: 32px;
		border-bottom: 3px solid transparent;
	}
	.panes .active {
		border-color: #f2c811;
	}
	h3 {
		padding-left: 4px;
		font-size: 10px;
		font-weight: 400;
		line-height: 24px;
	}
	.well {
		padding-left: 7px;
		font-feature-settings: normal;
		line-height: 21px;
		background: #fff;
		border: 1px dashed #d8d6d4;
	}
	.drill {
		padding: 7px 0 5px 8px;
	}
	.toggle {
		display: flex;
		align-items: center;
		gap: 4px;
		height: 28px;
		padding-left: 10px;
	}
	.toggle input {
		appearance: none;
		display: flex;
		align-items: center;
		width: 24px;
		height: 10px;
		margin: 0;
		background: linear-gradient(#605e5c, #605e5c) center / 100% 1px no-repeat;
	}
	.toggle input::before {
		content: '';
		box-sizing: border-box;
		width: 10px;
		height: 10px;
		border: 2px solid #605e5c;
		border-radius: 50%;
		background: #f3f2f1;
	}
	.toggle input:checked {
		justify-content: flex-end;
	}
	.toggle input:checked::before {
		background: #605e5c;
	}

	.fields {
		width: 131px;
		overflow: hidden;
	}
	.fields .head {
		padding: 0 0 0 10px;
		margin-right: -4px;
		font-feature-settings: normal;
	}
	.search {
		display: flex;
		align-items: center;
		gap: 6px;
		height: 22px;
		margin: 3px -2px 3px 3px;
		padding-left: 9px;
		background: #fff;
		border: 1px solid #d8d6d4;
	}
	.search input {
		width: 80px;
		padding: 0;
		border: 0;
		font: inherit;
		background: none;
	}
	.search input::placeholder {
		color: #3b3a39;
	}
	.source {
		display: flex;
		align-items: center;
		gap: 6px;
		height: 32px;
		padding-left: 3px;
		border-top: 1px solid #e1dfdd;
	}
	.source span {
		padding-left: 2px;
	}
	.fields label {
		display: flex;
		align-items: center;
		height: 19px;
		padding-left: 25px;
	}
	.fields label input {
		appearance: none;
		box-sizing: border-box;
		width: 10px;
		height: 10px;
		margin: 0;
		border: 1px solid #a6a4a2;
		border-radius: 2px;
	}
	.sigma {
		width: 16px;
		padding-left: 4px;
		font-weight: 700;
	}
</style>
